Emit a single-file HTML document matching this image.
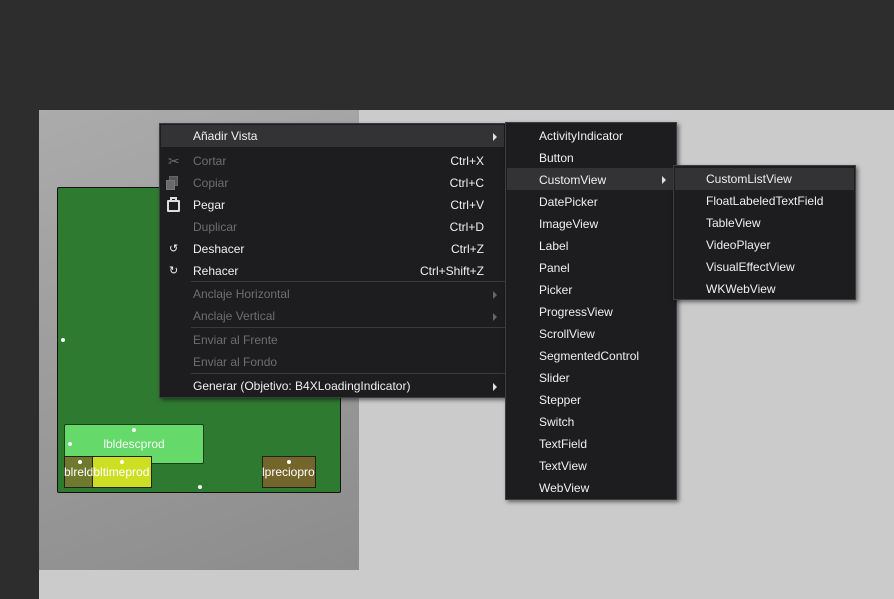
<!DOCTYPE html>
<html><head><meta charset="utf-8"><style>
*{margin:0;padding:0;box-sizing:border-box}
body{width:894px;height:599px;overflow:hidden;background:#2d2d2d;position:relative;font-family:"Segoe UI","Liberation Sans","DejaVu Sans",sans-serif;font-size:12px}
.a{position:absolute}
.t{position:absolute;white-space:nowrap;line-height:22px;color:#f0f0f0}
.d{color:#6e6e6e}
.k{position:absolute;right:21px;white-space:nowrap;line-height:22px;color:#f0f0f0}
.dot{position:absolute;width:4px;height:4px;border-radius:2px;background:#fff}
.arr{position:absolute;width:0;height:0;border-top:4px solid transparent;border-bottom:4px solid transparent;border-left:4px solid #e0e0e0}
.sep{position:absolute;left:31px;right:0;height:1px;background:#3a3a3a}
</style></head><body>
<div class="a" style="left:39px;top:110px;width:855px;height:489px;background:#cbcbcb"></div>
<div class="a" style="left:39px;top:110px;width:320px;height:460px;background:linear-gradient(160deg,#ababab,#8c8c8c)"></div>
<div class="a" style="left:57px;top:187px;width:284px;height:306px;background:#2f7a31;border:1px solid #111;border-radius:2px"></div>
<div class="dot" style="left:61px;top:338px"></div>
<div class="a" style="left:64px;top:424px;width:140px;height:40px;background:#66d96b;border:1px solid #1c3d1c;border-radius:2px"></div>
<div class="t" style="left:64px;top:433px;width:140px;text-align:center;color:#f4fff4">lbldescprod</div>
<div class="a" style="left:64px;top:456px;width:30px;height:32px;background:#6f7a2e;border:1px solid #222"></div>
<div class="a" style="left:92px;top:456px;width:60px;height:32px;background:#cddf23;border:1px solid #222"></div>
<div class="t" style="left:64px;top:461px;color:#fff;width:88px;overflow:hidden">blreldbltimeprod</div>
<div class="a" style="left:262px;top:456px;width:54px;height:32px;background:#74662a;border:1px solid #222"></div>
<div class="t" style="left:262px;top:461px;color:#fff;width:54px;overflow:hidden">lpreciopro</div>
<div class="dot" style="left:132px;top:428px"></div><div class="dot" style="left:68px;top:442px"></div>
<div class="dot" style="left:78px;top:460px"></div><div class="dot" style="left:120px;top:460px"></div>
<div class="dot" style="left:287px;top:460px"></div><div class="dot" style="left:198px;top:485px"></div>

<div class="a" style="left:159px;top:123px;width:347px;height:275px;background:#1d1d1f;border:1px solid #3d3d3d;box-shadow:2px 2px 4px rgba(0,0,0,.5)">
<div class="a" style="left:1px;top:1px;right:1px;height:22px;background:#333335"></div>
<div class="t" style="left:33px;top:1px">Añadir Vista</div><div class="arr" style="left:333px;top:9px"></div>
<div class="t d" style="left:33px;top:26px">Cortar</div><div class="k d" style="top:26px">Ctrl+X</div>
<div class="t d" style="left:33px;top:48px">Copiar</div><div class="k d" style="top:48px">Ctrl+C</div>
<div class="t" style="left:33px;top:70px">Pegar</div><div class="k" style="top:70px">Ctrl+V</div>
<div class="t d" style="left:33px;top:92px">Duplicar</div><div class="k d" style="top:92px">Ctrl+D</div>
<div class="t" style="left:33px;top:114px">Deshacer</div><div class="k" style="top:114px">Ctrl+Z</div>
<div class="t" style="left:33px;top:136px">Rehacer</div><div class="k" style="top:136px">Ctrl+Shift+Z</div>
<div class="t d" style="left:8px;top:26px;font-size:14px">✂</div>
<div class="a" style="left:9px;top:52px;width:9px;height:10px;background:#555;border:1px solid #666"></div><div class="a" style="left:6px;top:56px;width:9px;height:10px;background:#6a6a6a;border:1px solid #777"></div>
<div class="a" style="left:7px;top:76px;width:13px;height:12px;border:2px solid #ddd;border-radius:1px"></div>
<div class="a" style="left:10px;top:73px;width:7px;height:4px;border:2px solid #ddd;border-bottom:none"></div>
<div class="t" style="left:9px;top:114px;font-size:11px">↺</div><div class="t" style="left:9px;top:136px;font-size:11px">↻</div>
<div class="sep" style="top:157px"></div>
<div class="t d" style="left:33px;top:159px">Anclaje Horizontal</div><div class="arr" style="left:333px;top:167px;border-left-color:#666"></div>
<div class="t d" style="left:33px;top:181px">Anclaje Vertical</div><div class="arr" style="left:333px;top:189px;border-left-color:#666"></div>
<div class="sep" style="top:203px"></div>
<div class="t d" style="left:33px;top:205px">Enviar al Frente</div>
<div class="t d" style="left:33px;top:227px">Enviar al Fondo</div>
<div class="sep" style="top:249px"></div>
<div class="t" style="left:33px;top:251px">Generar (Objetivo: B4XLoadingIndicator)</div><div class="arr" style="left:333px;top:259px"></div>
</div>

<div class="a" style="left:505px;top:122px;width:172px;height:378px;background:#1d1d1f;border:1px solid #3d3d3d;box-shadow:2px 2px 4px rgba(0,0,0,.5)">
<div class="a" style="left:1px;top:45px;right:1px;height:22px;background:#333335"></div>
<div class="arr" style="left:156px;top:53px"></div>
<div class="t" style="left:33px;top:2px;line-height:22px">ActivityIndicator<br>Button<br>CustomView<br>DatePicker<br>ImageView<br>Label<br>Panel<br>Picker<br>ProgressView<br>ScrollView<br>SegmentedControl<br>Slider<br>Stepper<br>Switch<br>TextField<br>TextView<br>WebView</div>
</div>

<div class="a" style="left:673px;top:165px;width:183px;height:135px;background:#1d1d1f;border:1px solid #3d3d3d;box-shadow:2px 2px 4px rgba(0,0,0,.5)">
<div class="a" style="left:1px;top:2px;right:1px;height:22px;background:#333335"></div>
<div class="t" style="left:32px;top:2px">CustomListView<br>FloatLabeledTextField<br>TableView<br>VideoPlayer<br>VisualEffectView<br>WKWebView</div>
</div>
</body></html>
